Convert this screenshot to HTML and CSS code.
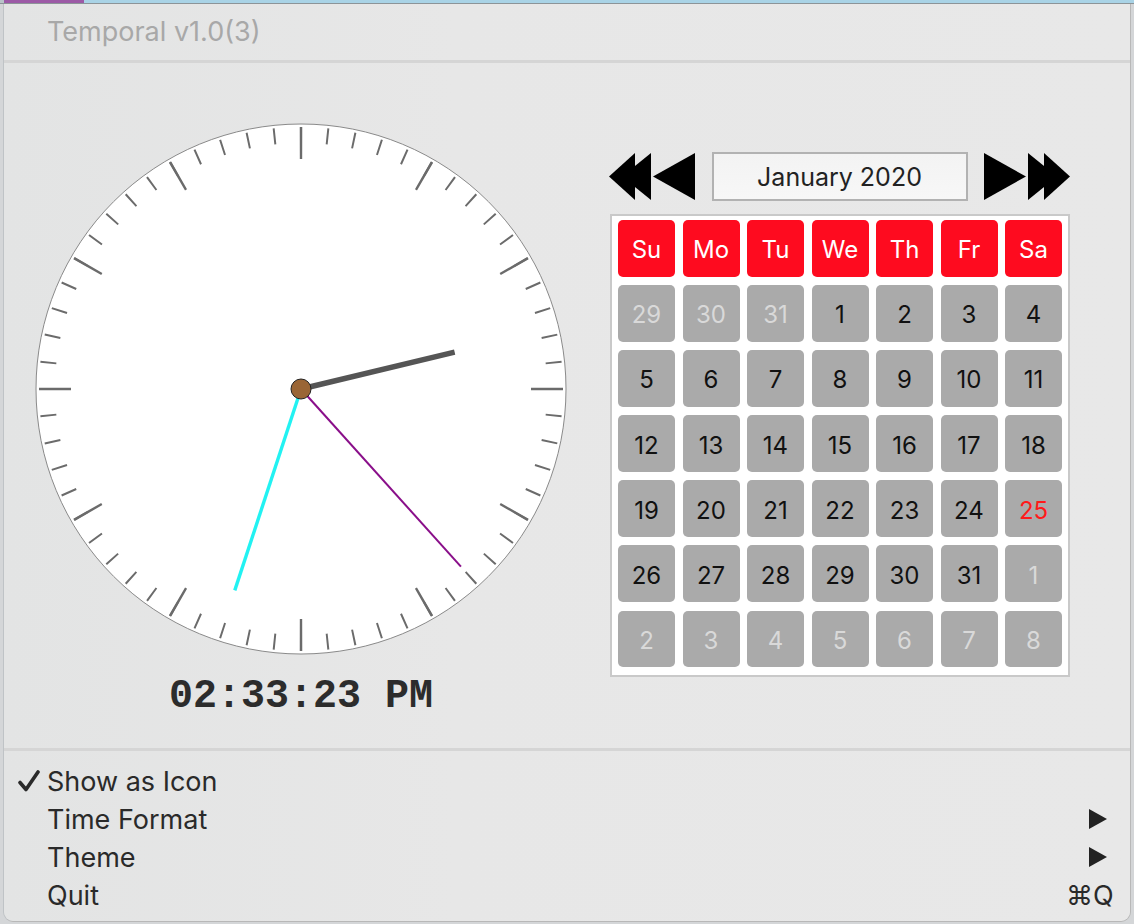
FILE: index.html
```html
<!DOCTYPE html>
<html>
<head>
<meta charset="utf-8">
<link rel="stylesheet" href="styles.css">
</head>
<body>
<div class="topbar"><span class="tb-edge"></span><span class="tb-purple"></span><span class="tb-blue"></span></div>
<div class="panel">
  <div class="header">Temporal v1.0(3)</div>
  <div class="sep"></div>
  <div class="main">
    <div class="clock-col">
      <svg class="clock" width="540" height="540" viewBox="0 0 540 540">
        <circle cx="270" cy="270" r="265" fill="#fff" stroke="#8a8a8a" stroke-width="1"/>
        <circle class="minor" cx="270" cy="270" r="254" pathLength="60" fill="none"/>
        <circle class="major" cx="270" cy="270" r="246" pathLength="12" fill="none"/>
        <g transform="translate(270 270)">
          <line class="min-hand" x1="0" y1="0" x2="0" y2="-212" transform="rotate(198.2)"/>
          <line class="sec-hand" x1="0" y1="0" x2="0" y2="-239" transform="rotate(138)"/>
          <line class="hour-hand" x1="0" y1="0" x2="0" y2="-158" transform="rotate(76.5)"/>
          <circle r="10" fill="#9a6535" stroke="#222" stroke-width="1"/>
        </g>
      </svg>
      <div class="time">02:33:23 PM</div>
    </div>
    <div class="cal-col">
      <div class="nav">
        <svg class="arrows" width="86" height="47" viewBox="0 0 86 47">
          <polygon points="0,23.5 26,0 26,47"/>
          <polygon points="13,23.5 42,0 42,47"/>
          <polygon points="44,23.5 86,0 86,47"/>
        </svg>
        <div class="month">January 2020</div>
        <svg class="arrows" width="86" height="47" viewBox="0 0 86 47">
          <polygon points="0,0 42,23.5 0,47"/>
          <polygon points="44,0 73,23.5 44,47"/>
          <polygon points="60,0 86,23.5 60,47"/>
        </svg>
      </div>
      <div class="cal">
        <div class="c h">Su</div><div class="c h">Mo</div><div class="c h">Tu</div><div class="c h">We</div><div class="c h">Th</div><div class="c h">Fr</div><div class="c h">Sa</div>
        <div class="c o">29</div><div class="c o">30</div><div class="c o">31</div><div class="c">1</div><div class="c">2</div><div class="c">3</div><div class="c">4</div>
        <div class="c">5</div><div class="c">6</div><div class="c">7</div><div class="c">8</div><div class="c">9</div><div class="c">10</div><div class="c">11</div>
        <div class="c">12</div><div class="c">13</div><div class="c">14</div><div class="c">15</div><div class="c">16</div><div class="c">17</div><div class="c">18</div>
        <div class="c">19</div><div class="c">20</div><div class="c">21</div><div class="c">22</div><div class="c">23</div><div class="c">24</div><div class="c today">25</div>
        <div class="c">26</div><div class="c">27</div><div class="c">28</div><div class="c">29</div><div class="c">30</div><div class="c">31</div><div class="c o">1</div>
        <div class="c o">2</div><div class="c o">3</div><div class="c o">4</div><div class="c o">5</div><div class="c o">6</div><div class="c o">7</div><div class="c o">8</div>
      </div>
    </div>
  </div>
  <div class="sep"></div>
  <div class="menu">
    <div class="item"><span class="check"><svg width="22" height="22" viewBox="0 0 22 22"><path d="M2 12.5 L8 19.5 L20 2" fill="none" stroke="#2a2a2a" stroke-width="3.6" stroke-linecap="round" stroke-linejoin="round"/></svg></span><span class="label">Show as Icon</span></div>
    <div class="item"><span class="check"></span><span class="label">Time Format</span><span class="sub"><svg width="18" height="20" viewBox="0 0 18 20"><polygon points="0,0 18,10 0,20"/></svg></span></div>
    <div class="item"><span class="check"></span><span class="label">Theme</span><span class="sub"><svg width="18" height="20" viewBox="0 0 18 20"><polygon points="0,0 18,10 0,20"/></svg></span></div>
    <div class="item"><span class="check"></span><span class="label">Quit</span><span class="key">⌘Q</span></div>
  </div>
</div>
</body>
</html>
```

FILE: styles.css
```css
* { box-sizing: border-box; }

body {
  margin: 0;
  width: 1134px;
  height: 924px;
  overflow: hidden;
  background: #d4d6d8;
  font-family: Inter, "Noto Sans", sans-serif;
}

.topbar {
  display: flex;
  height: 4px;
  border-bottom: 1px solid #8c9498;
}
.tb-edge { width: 4px; background: #b9c4c9; }
.tb-purple { width: 80px; background: #9c5aa6; }
.tb-blue { flex: 1; background: #a9d3e6; }

.panel {
  margin-left: 4px;
  width: 1126px;
  height: 917px;
  background: linear-gradient(90deg, #e3e4e4 0%, #e7e7e7 40%, #e8e8e8 100%);
  border-radius: 0 0 9px 9px;
  box-shadow: -1px 0 0 #bfc3c6, 1px 0 0 #b8b8b8, 0 1px 0 #b8b8b8;
}

.header {
  height: 56px;
  padding: 13px 0 0 43px;
  font-size: 27px;
  line-height: 30px;
  color: #a8a8a8;
}

.sep {
  height: 3px;
  background: #d5d5d5;
}

.main {
  height: 685px;
  display: flex;
  padding-left: 27px;
}

.clock-col {
  width: 540px;
  padding-top: 56px;
  display: flex;
  flex-direction: column;
  align-items: center;
}

.clock { display: block; }

.minor {
  stroke: #6b6b6b;
  stroke-width: 16;
  stroke-dasharray: 0.075 0.925;
  stroke-dashoffset: 0.0375;
}
.major {
  stroke: #6b6b6b;
  stroke-width: 32;
  stroke-dasharray: 0.0194 0.9806;
  stroke-dashoffset: 0.0097;
}

.hour-hand { stroke: #555; stroke-width: 5.5; }
.min-hand { stroke: #22f2f2; stroke-width: 3.4; }
.sec-hand { stroke: #8a0f8a; stroke-width: 2; }

.time {
  margin-top: 18px;
  font-family: "Liberation Mono", "DejaVu Sans Mono", monospace;
  font-weight: bold;
  font-size: 40px;
  line-height: 40px;
  color: #2c2c2c;
}

.cal-col {
  margin-left: 38px;
  padding-top: 89px;
  width: 461px;
}

.nav {
  display: flex;
  align-items: center;
  justify-content: space-between;
  height: 49px;
}
.arrows { display: block; fill: #000; }

.month {
  width: 256px;
  height: 49px;
  border: 2px solid #b2b2b2;
  background: linear-gradient(180deg, #f3f3f3, #f7f7f7);
  display: flex;
  align-items: center;
  justify-content: center;
  font-size: 25px;
  color: #222;
  padding-top: 1px;
}

.cal {
  margin-top: 13px;
  margin-left: 1px;
  width: 460px;
  border: 2px solid #c9c9c9;
  background: #fff;
  padding: 4px 6px 8px 6px;
  display: grid;
  grid-template-columns: repeat(7, 57px);
  grid-auto-rows: 56.6px;
  column-gap: 7.5px;
  row-gap: 8.5px;
}

.c {
  background: #aaaaaa;
  border-radius: 5px;
  display: flex;
  align-items: center;
  justify-content: center;
  font-size: 24px;
  color: #111;
  padding-top: 3px;
}
.c.h { background: #fe0b1f; color: #fff; }
.c.o { color: #d9d9d9; }
.c.today { color: #ff1a1a; }

.menu {
  padding-top: 11px;
}
.item {
  display: flex;
  align-items: center;
  height: 38px;
  font-size: 27px;
  color: #2a2a2a;
}
.check {
  width: 43px;
  padding-left: 14px;
  display: flex;
  align-items: center;
}
.check svg { display: block; }
.label { flex: 1; }
.sub { width: 41px; display: flex; align-items: center; }
.sub svg { display: block; fill: #222; }
.key {
  width: 64px;
  font-size: 27px;
}
```
